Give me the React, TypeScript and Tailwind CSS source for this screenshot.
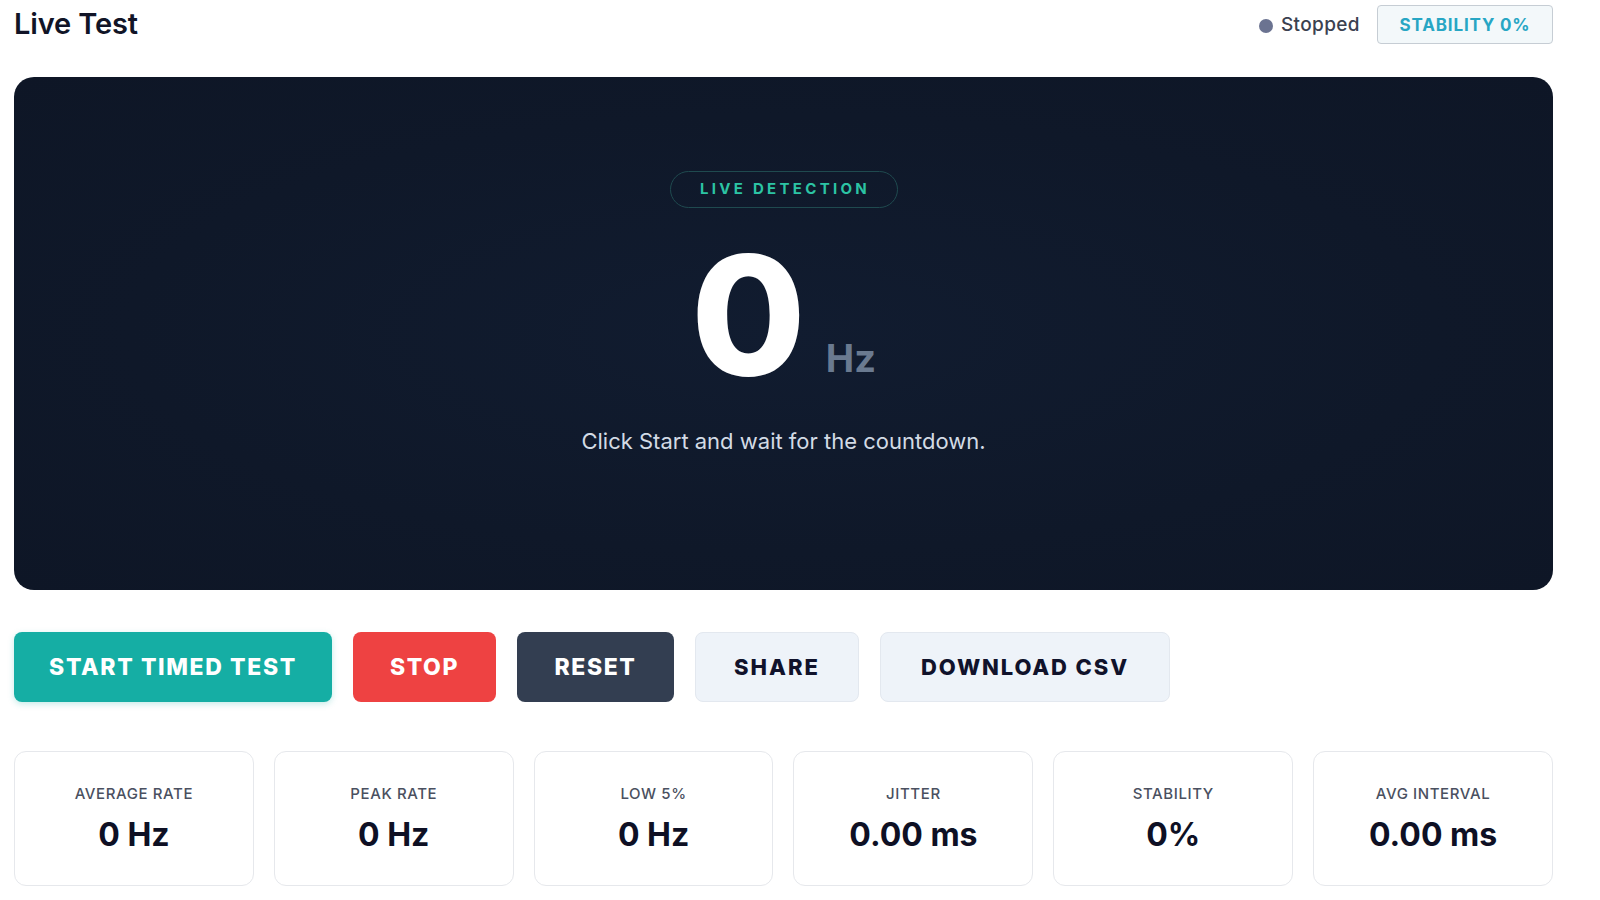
import React from 'react';

const stats = [
  { label: 'AVERAGE RATE', value: '0 Hz' },
  { label: 'PEAK RATE', value: '0 Hz' },
  { label: 'LOW 5%', value: '0 Hz' },
  { label: 'JITTER', value: '0.00 ms' },
  { label: 'STABILITY', value: '0%' },
  { label: 'AVG INTERVAL', value: '0.00 ms' },
];

export default function App() {
  return (
    <div className="min-h-screen bg-white font-['Inter',sans-serif] pl-[14px] pr-[47px]">
      {/* Header */}
      <div className="flex h-[47px] items-center justify-between pt-[1px]">
        <h1 className="text-[29px] font-semibold tracking-[-0.005em] text-[#111427]">Live Test</h1>
        <div className="flex items-center">
          <span className="mt-[3px] h-[14px] w-[14px] rounded-full bg-[#6b7391]" />
          <span className="ml-[8px] mt-[3px] text-[19px] font-medium tracking-[0.02em] text-[#3b4150]">Stopped</span>
          <div className="ml-[17px] flex h-[39px] w-[176px] items-center justify-center rounded-[4px] border-[1.5px] border-[#c6cdd4] bg-[#f3f8fa] pt-[3px] text-[17px] font-bold tracking-[0.05em] text-[#27a6c4]">
            STABILITY 0%
          </div>
        </div>
      </div>

      {/* Live panel */}
      <div className="mt-[30px] flex h-[513px] flex-col items-center rounded-[20px] bg-[radial-gradient(ellipse_at_center,#111c30_0%,#0f1829_60%,#0e1626_100%)] pt-[94px]">
        <div className="flex h-[37px] w-[228px] items-center justify-center rounded-full border border-[#1f4a4f] pl-[3px] text-[15px] font-bold tracking-[0.22em] text-[#2cc4a4]">
          LIVE DETECTION
        </div>
        <div className="mt-[24px] flex items-baseline">
          <span className="text-[166px] font-extrabold leading-none text-white">0</span>
          <span className="relative top-[-3px] ml-[20px] text-[38px] font-bold text-[#6a7a90]">Hz</span>
        </div>
        <p className="mt-[27px] text-[22px] text-[#d3dbe5]">Click Start and wait for the countdown.</p>
      </div>

      {/* Buttons */}
      <div className="mt-[42px] flex gap-[21px]">
        <button className="h-[70px] w-[318px] rounded-[8px] bg-[#15aea4] text-[23px] font-extrabold tracking-[0.07em] text-white shadow-[0_2px_6px_rgba(20,174,164,0.25)]">
          START TIMED TEST
        </button>
        <button className="h-[70px] w-[143px] rounded-[8px] bg-[#ee4242] text-[23px] font-extrabold tracking-[0.07em] text-white">
          STOP
        </button>
        <button className="h-[70px] w-[157px] rounded-[8px] bg-[#333e51] text-[23px] font-extrabold tracking-[0.07em] text-white">
          RESET
        </button>
        <button className="h-[70px] w-[164px] rounded-[8px] border border-[#e3e8ef] bg-[#eef3f9] text-[22px] font-extrabold tracking-[0.09em] text-[#10122b]">
          SHARE
        </button>
        <button className="h-[70px] w-[290px] rounded-[8px] border border-[#e3e8ef] bg-[#eef3f9] text-[22px] font-extrabold tracking-[0.085em] text-[#10122b]">
          DOWNLOAD CSV
        </button>
      </div>

      {/* Stats */}
      <div className="mt-[49px] grid grid-cols-6 gap-[20px]">
        {stats.map((s) => (
          <div
            key={s.label}
            className="flex h-[135px] flex-col items-center rounded-[12px] border border-[#e6e8ec] bg-white pt-[31px]"
          >
            <span className="text-[15px] font-medium tracking-[0.04em] text-[#4a5060]">{s.label}</span>
            <span className="mt-[9px] text-[32px] font-bold leading-[40px] text-[#0e1024]">{s.value}</span>
          </div>
        ))}
      </div>
    </div>
  );
}
